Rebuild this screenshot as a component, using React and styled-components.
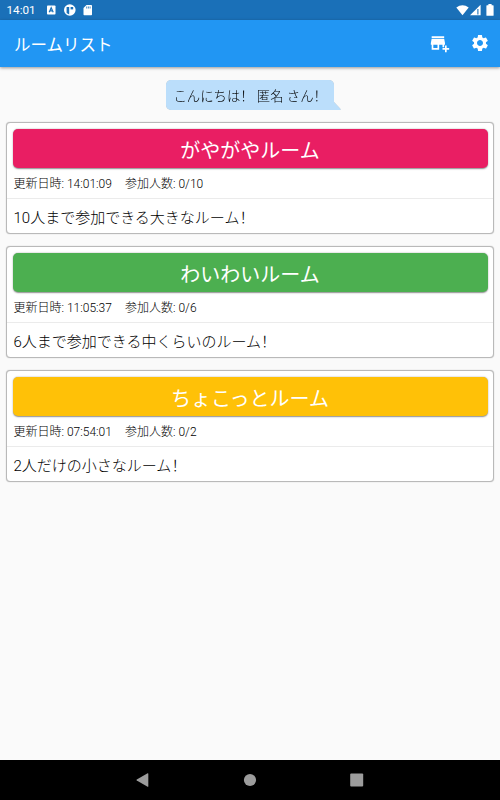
import styled, { createGlobalStyle } from "styled-components";
import { MdAddBusiness, MdSettings } from "react-icons/md";

const GlobalStyle = createGlobalStyle`
  * {
    box-sizing: border-box;
  }
  body {
    margin: 0;
    background-color: #fafafa;
    font-family: Roboto, "Noto Sans CJK JP", sans-serif;
    color: #212121;
  }
`;

const Screen = styled.div`
  display: flex;
  flex-direction: column;
  width: 500px;
  height: 800px;
  overflow: hidden;
`;

const StatusBar = styled.div`
  display: flex;
  align-items: center;
  height: 20px;
  padding: 0 6px 0 6.5px;
  background-color: #1a70b8;
  color: #fff;
`;

const Clock = styled.span`
  width: 39.5px;
  font-size: 11.7px;
  line-height: 20px;
`;

const StatusIcon = styled.svg`
  display: block;
  flex: none;
  width: ${(props) => props.$width}px;
  height: 12px;
  margin-right: ${(props) => props.$gap || 0}px;
`;

const Spacer = styled.div`
  flex: 1;
`;

const AppBar = styled.header`
  display: flex;
  align-items: center;
  height: 46.5px;
  flex: none;
  padding: 0 10px 0 14px;
  background-color: #2196f3;
  color: #fff;
  box-shadow: 0 1px 3px rgba(0, 0, 0, 0.4);
`;

const Title = styled.h1`
  flex: 1;
  margin: 0;
  padding-top: 5px;
  font-size: 16.5px;
  font-weight: 400;
  line-height: 24px;
`;

const IconButton = styled.button`
  display: flex;
  padding: 0;
  margin-left: 20px;
  border: 0;
  background: none;
  color: #fff;
  font-size: 20px;
`;

const Main = styled.main`
  flex: 1;
  padding: 13.5px 6px 0;
`;

const GreetingRow = styled.div`
  display: flex;
  justify-content: center;
  height: 42px;
  padding-left: 7px;
`;

const Bubble = styled.div`
  display: flex;
  height: 30px;
  filter: drop-shadow(0 0.5px 0.5px rgba(0, 0, 0, 0.25));
`;

const BubbleText = styled.div`
  width: 168px;
  padding-left: 7.5px;
  border-radius: 5px 5px 0 5px;
  background-color: #bbdefb;
  font-size: 13.35px;
  font-weight: 300;
  line-height: 31px;
  white-space: pre;
  color: #000;
`;

const BubbleTail = styled.svg`
  align-self: flex-end;
  width: 7px;
  height: 8px;
`;

const Mark = styled.span`
  font-family: "Noto Sans CJK SC", sans-serif;
`;

const Card = styled.section`
  height: 112px;
  margin-bottom: 12px;
  padding-top: 6px;
  border: 1px solid #b9b9b9;
  border-radius: 4px;
  background-color: #fff;
  box-shadow: 0 0 1px #aaa;
`;

const RoomButton = styled.button`
  display: block;
  width: calc(100% - 11px);
  height: 39px;
  margin: 0 auto;
  padding: 2px 0 0;
  border: 0;
  border-radius: 5px;
  background-color: ${(props) => props.$color};
  box-shadow: 0 0.5px 1.5px rgba(0, 0, 0, 0.45);
  color: #fff;
  font-family: inherit;
  font-size: 20px;
  line-height: 41px;
`;

const Info = styled.div`
  display: flex;
  height: 31px;
  padding-left: 6.5px;
  border-bottom: 1px solid #ebebeb;
  font-size: 12px;
  font-weight: 300;
  line-height: 33px;
  color: #000;
`;

const Updated = styled.span`
  width: 111.5px;
`;

const Description = styled.p`
  margin: 0;
  padding-left: 6.5px;
  font-size: 15px;
  font-weight: 300;
  line-height: 35px;
  color: #000;
`;

const NavBar = styled.nav`
  display: flex;
  align-items: center;
  justify-content: space-between;
  height: 40px;
  padding: 0 136px;
  background-color: #000;
`;

const NavIcon = styled.svg`
  width: 14px;
  height: 14px;
  fill: #9c9c9c;
`;

const rooms = [
  {
    name: "がやがやルーム",
    color: "#e91e63",
    updated: "14:01:09",
    members: "0/10",
    description: "10人まで参加できる大きなルーム",
  },
  {
    name: "わいわいルーム",
    color: "#4caf50",
    updated: "11:05:37",
    members: "0/6",
    description: "6人まで参加できる中くらいのルーム",
  },
  {
    name: "ちょこっとルーム",
    color: "#ffc107",
    updated: "07:54:01",
    members: "0/2",
    description: "2人だけの小さなルーム",
  },
];

const Room = ({ room }) => (
  <Card>
    <RoomButton $color={room.color}>{room.name}</RoomButton>
    <Info>
      <Updated>更新日時: {room.updated}</Updated>
      <span>参加人数: {room.members}</span>
    </Info>
    <Description>
      {room.description}
      <Mark lang="zh-Hans">！</Mark>
    </Description>
  </Card>
);

const App = () => {
  return (
    <Screen lang="ja">
      <GlobalStyle />
      <StatusBar>
        <Clock>14:01</Clock>
        <StatusIcon $width={10} $gap={8} viewBox="0 0 10 12">
          <rect x="1" y="1.5" width="8.5" height="9" rx="0.8" fill="#fff" />
          <path
            d="M3.2 8.3 5.2 3.8 7.2 8.3M4 6.8h2.4"
            fill="none"
            stroke="#1a70b8"
            strokeWidth="1.2"
          />
        </StatusIcon>
        <StatusIcon $width={12} $gap={7} viewBox="0 0 12 12">
          <circle cx="5.8" cy="6" r="5.8" fill="#fff" />
          <path d="M2.6 3h2.6v7.4L2.6 9z" fill="#1a70b8" />
          <path d="M6.6 3h2.6v2.4H6.6z" fill="#1a70b8" />
        </StatusIcon>
        <StatusIcon $width={10} viewBox="0 0 10 12">
          <path
            d="M3.5 1H8.3q.7 0 .7.7v8.8q0 .7-.7.7H1.2q-.7 0-.7-.7V4z"
            fill="#fff"
          />
          <path d="M3.7 2.5v2M5.4 2.5v2M7.1 2.5v2" stroke="#1a70b8" strokeWidth="0.8" />
        </StatusIcon>
        <Spacer />
        <StatusIcon $width={13} $gap={1} viewBox="0 0 13 12">
          <path d="M0.3 3.6Q6.5-1.2 12.7 3.6L6.5 11.3z" fill="#fff" />
        </StatusIcon>
        <StatusIcon $width={11} $gap={5} viewBox="0 0 11 12">
          <path d="M0 11.2 10.6 0.7V11.2z" fill="#fff" />
          <path d="M7.9 5v5.4" stroke="#1a70b8" strokeWidth="1.1" />
        </StatusIcon>
        <StatusIcon $width={8} viewBox="0 0 8 12">
          <path
            d="M2.4 0h3.2v1.2H7q.6 0 .6.6v9.4q0 .6-.6.6H1q-.6 0-.6-.6V1.8q0-.6.6-.6h1.4z"
            fill="#fff"
          />
        </StatusIcon>
      </StatusBar>

      <AppBar>
        <Title>ルームリスト</Title>
        <IconButton aria-label="ルーム追加">
          <MdAddBusiness />
        </IconButton>
        <IconButton aria-label="設定">
          <MdSettings />
        </IconButton>
      </AppBar>

      <Main>
        <GreetingRow>
          <Bubble>
            <BubbleText>
              こんにちは<Mark lang="zh-Hans">！</Mark> 匿名 さん
              <Mark lang="zh-Hans">！</Mark>
            </BubbleText>
            <BubbleTail viewBox="0 0 7 8">
              <path d="M0 0 6.3 6.8Q7 8 6 8H0z" fill="#bbdefb" />
            </BubbleTail>
          </Bubble>
        </GreetingRow>
        {rooms.map((room) => (
          <Room key={room.name} room={room} />
        ))}
      </Main>

      <NavBar>
        <NavIcon viewBox="0 0 14 14">
          <path d="M.8 6.4 11.6.3q.7-.3.7.5v12.4q0 .8-.7.5L.8 7.6Q0 7 .8 6.4z" />
        </NavIcon>
        <NavIcon viewBox="0 0 14 14">
          <circle cx="7" cy="7" r="6.1" />
        </NavIcon>
        <NavIcon viewBox="0 0 14 14">
          <rect x="0.2" y="0.5" width="13" height="13" rx="1" />
        </NavIcon>
      </NavBar>
    </Screen>
  );
};

export default App;
